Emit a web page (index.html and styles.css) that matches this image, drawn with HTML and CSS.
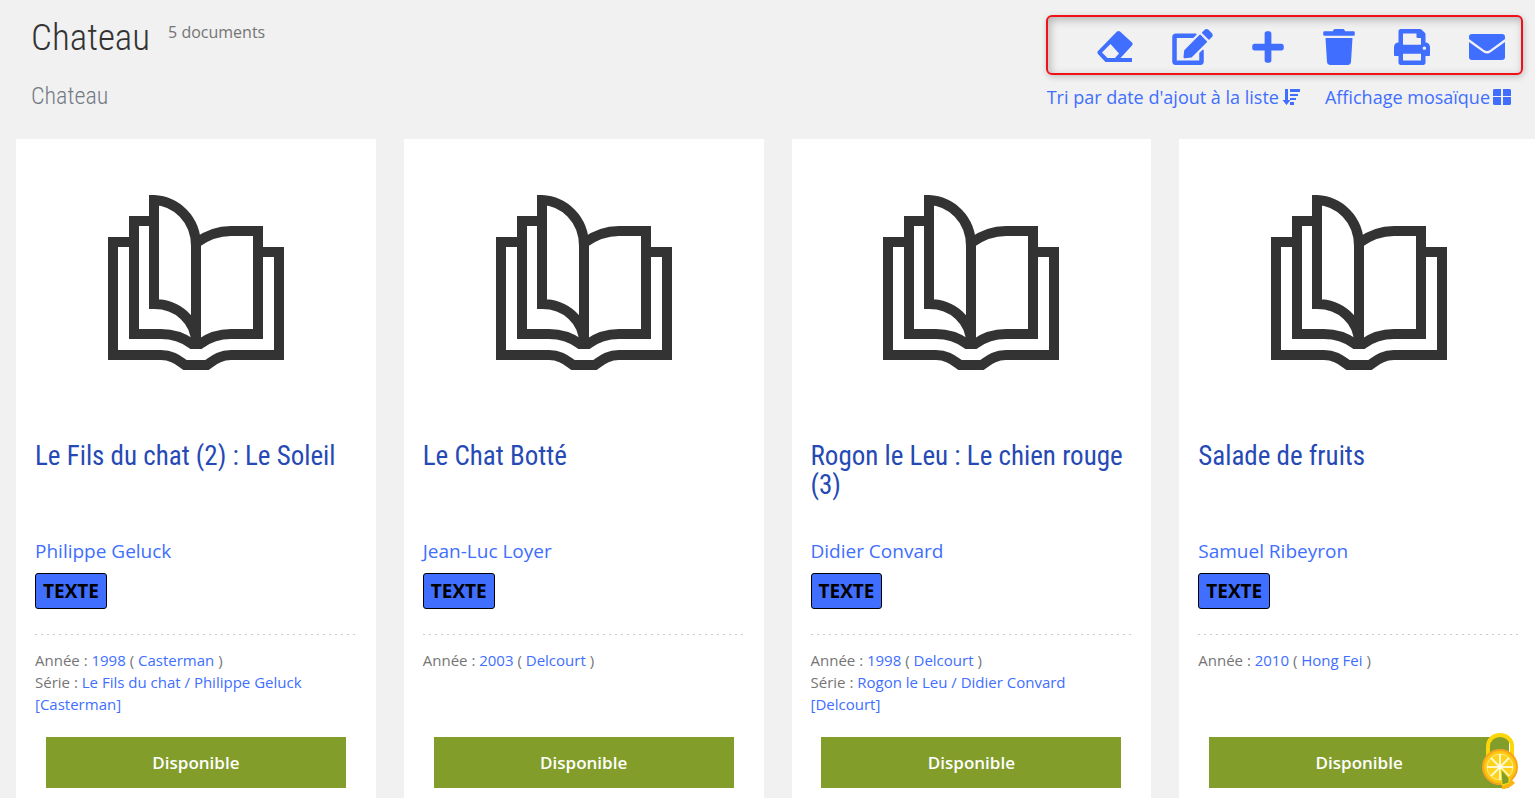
FILE: index.html
```
<!DOCTYPE html>
<html lang="fr">
<head>
    <meta charset="UTF-8">
    <title>Chateau</title>
    <link rel="stylesheet" href="styles.css">
</head>
<body>
    <svg class="sprite" aria-hidden="true">
        <symbol id="book" viewBox="0 0 176 176">
            <g fill="none" stroke="#333" stroke-width="10">
                <path d="M21 47H5v113h48c12 0 18 6 24 10h22c6-4 12-10 24-10h48V57h-16"/>
                <path d="M42 26H26v113h27c14 0 23 4 31 10h8c8-6 17-10 31-10h27V36h-27c-14 0-24 4-35 12"/>
                <path d="M88 148V51C88 24 68 6 46 5V109c24 0 42 17 42 39z"/>
            </g>
        </symbol>
    </svg>

    <header class="header">
        <div class="header-left">
            <div class="title-line">
                <h1>Chateau</h1>
                <span class="count">5 documents</span>
            </div>
            <h2>Chateau</h2>
        </div>
        <div class="header-right">
            <div class="toolbar">
                <button type="button" title="Vider"><svg width="36" height="36" viewBox="0 0 36 36"><path fill-rule="evenodd" d="M20 2.500q1.500-1 3 0l12 11q1.300 1.500 0 3L23.500 29H35v4H8.500L1 25q-1.300-1.600 0-3zM13.500 15L5 23.500l5.500 5.500h7.500l4-4.500z"/></svg></button>
                <button type="button" title="Modifier"><svg width="41" height="36" viewBox="0 0 576 512"><path d="M402.600 83.200l90.200 90.200c3.800 3.800 3.800 10 0 13.800L274.400 405.600l-92.800 10.300c-12.400 1.400-22.900-9.100-21.500-21.500l10.300-92.800L388.800 83.200c3.800-3.800 10-3.800 13.800 0zm162-22.900l-48.800-48.800c-15.200-15.200-39.900-15.200-55.200 0l-35.400 35.400c-3.800 3.800-3.800 10 0 13.800l90.200 90.200c3.800 3.800 10 3.800 13.800 0l35.400-35.400c15.200-15.300 15.200-40 0-55.200zM384 346.200V448H64V128h229.800c3.200 0 6.200-1.300 8.500-3.500l40-40c7.600-7.600 2.200-20.500-8.500-20.500H48C21.500 64 0 85.500 0 112v352c0 26.500 21.500 48 48 48h352c26.500 0 48-21.500 48-48V306.200c0-10.700-12.900-16-20.500-8.500l-40 40c-2.200 2.300-3.500 5.300-3.500 8.500z"/></svg></button>
                <button type="button" title="Ajouter"><svg width="32" height="36" viewBox="0 0 448 512"><path d="M416 208H272V64c0-17.670-14.330-32-32-32h-32c-17.670 0-32 14.330-32 32v144H32c-17.670 0-32 14.330-32 32v32c0 17.670 14.330 32 32 32h144v144c0 17.670 14.330 32 32 32h32c17.670 0 32-14.330 32-32V304h144c17.670 0 32-14.330 32-32v-32c0-17.670-14.330-32-32-32z"/></svg></button>
                <button type="button" title="Supprimer"><svg width="32" height="36" viewBox="0 0 448 512"><path d="M432 32H312l-9.400-18.700A24 24 0 0 0 281.100 0H166.800a23.720 23.720 0 0 0-21.400 13.300L136 32H16A16 16 0 0 0 0 48v32a16 16 0 0 0 16 16h416a16 16 0 0 0 16-16V48a16 16 0 0 0-16-16zM53.200 467a48 48 0 0 0 47.900 45h245.800a48 48 0 0 0 47.900-45L416 128H32z"/></svg></button>
                <button type="button" title="Imprimer"><svg width="36" height="36" viewBox="0 0 512 512"><path d="M448 192V77.250c0-8.490-3.370-16.620-9.370-22.630L393.370 9.370c-6-6-14.140-9.370-22.630-9.370H96C78.330 0 64 14.330 64 32v160c-35.350 0-64 28.650-64 64v112c0 8.840 7.160 16 16 16h48v96c0 17.670 14.330 32 32 32h320c17.670 0 32-14.330 32-32v-96h48c8.840 0 16-7.160 16-16V256c0-35.350-28.650-64-64-64zm-64 256H128v-96h256v96zm0-224H128V64h192v48c0 8.840 7.160 16 16 16h48v96zm48 72c-13.250 0-24-10.750-24-24 0-13.260 10.750-24 24-24s24 10.740 24 24c0 13.250-10.750 24-24 24z"/></svg></button>
                <button type="button" title="Envoyer"><svg width="36" height="36" viewBox="0 0 36 36"><path d="M3 5h30q3 0 3 3v2L21 21q-3 2-6 0L0 10V8q0-3 3-3zM0 13l14 10q4 3 8 0l14-10v15q0 3-3 3H3q-3 0-3-3z"/></svg></button>
            </div>
            <nav class="display">
                <a href="#">Tri par date d'ajout à la liste <svg width="18" height="18" viewBox="0 0 18 18"><path d="M3 1h3v11h2.500l-4 5-4-5H3zM8 1h10v3H8zM8 6h8v2H8zM8 10h6v2H8zM8 14h4v3H8z"/></svg></a>
                <a href="#">Affichage mosaïque <svg width="18" height="18" viewBox="0 0 18 18"><path d="M1 1h7v7H0V2zM10 1h7l1 1v6h-8zM0 9h8v8H1l-1-1zM10 9h8v7l-1 1h-7z"/></svg></a>
            </nav>
        </div>
    </header>

    <main class="cards">
        <article class="card">
            <svg class="cover"><use href="#book"/></svg>
            <h3><a href="#">Le Fils du chat (2) : Le Soleil</a></h3>
            <a class="author" href="#">Philippe Geluck</a>
            <span class="type">TEXTE</span>
            <div class="infos">
                <p>Année : <a href="#">1998</a> ( <a href="#">Casterman</a> )</p>
                <p>Série : <a href="#">Le Fils du chat / Philippe Geluck [Casterman]</a></p>
            </div>
            <button type="button" class="dispo">Disponible</button>
        </article>
        <article class="card">
            <svg class="cover"><use href="#book"/></svg>
            <h3><a href="#">Le Chat Botté</a></h3>
            <a class="author" href="#">Jean-Luc Loyer</a>
            <span class="type">TEXTE</span>
            <div class="infos">
                <p>Année : <a href="#">2003</a> ( <a href="#">Delcourt</a> )</p>
            </div>
            <button type="button" class="dispo">Disponible</button>
        </article>
        <article class="card">
            <svg class="cover"><use href="#book"/></svg>
            <h3><a href="#">Rogon le Leu : Le chien rouge (3)</a></h3>
            <a class="author" href="#">Didier Convard</a>
            <span class="type">TEXTE</span>
            <div class="infos">
                <p>Année : <a href="#">1998</a> ( <a href="#">Delcourt</a> )</p>
                <p>Série : <a href="#">Rogon le Leu / Didier Convard [Delcourt]</a></p>
            </div>
            <button type="button" class="dispo">Disponible</button>
        </article>
        <article class="card">
            <svg class="cover"><use href="#book"/></svg>
            <h3><a href="#">Salade de fruits</a></h3>
            <a class="author" href="#">Samuel Ribeyron</a>
            <span class="type">TEXTE</span>
            <div class="infos">
                <p>Année : <a href="#">2010</a> ( <a href="#">Hong Fei</a> )</p>
            </div>
            <button type="button" class="dispo">Disponible</button>
        </article>
    </main>

    <button type="button" class="cookies" title="Cookies">
        <svg width="38" height="58" viewBox="0 0 38 58">
            <path d="M7 26V14a12 11 0 0 1 24 0v12" fill="none" stroke="#fbd608" stroke-width="4"/>
            <circle cx="19" cy="35" r="18" fill="#f7a41d"/>
            <circle cx="19" cy="35" r="16" fill="#fdc70c"/>
            <circle cx="19" cy="35" r="13" fill="#fcd21c" stroke="#fdec8c" stroke-width="1"/>
            <path d="M19 22v26M6 35h26M10 26l18 18M28 26L10 44" stroke="#fff7c8" stroke-width="2"/>
            <circle cx="19" cy="35" r="2" fill="#fff"/>
            <path d="M20 37l14 14q-6 6-13 6z" fill="#fbb515"/>
            <path d="M20 37l8 9v5l-7 2z" fill="#829d2a" stroke="#fbe30a" stroke-width="1"/>
        </svg>
    </button>
</body>
</html>
```
FILE: styles.css
```
*{
    margin: 0;
    padding: 0;
    box-sizing: border-box;
}
body{
    background-color: #f1f1f1;
    font-family: "Open Sans", sans-serif;
    font-size: 19px;
    color: #757575;
    overflow-x: hidden;
}
body::-webkit-scrollbar{
    display: none;
}
a{
    color: #406eff;
    text-decoration: none;
}
button{
    border: none;
    background: none;
    font-family: inherit;
    cursor: pointer;
}
.sprite{
    display: none;
}
h1, h2, h3{
    font-family: "Roboto Condensed", Roboto, sans-serif;
    font-weight: 300;
}
.header{
    display: flex;
    justify-content: space-between;
    padding: 15px 12px 0 31px;
    height: 139px;
}
.title-line{
    display: flex;
    gap: 18px;
}
h1{
    font-size: 37px;
    line-height: 46px;
    color: #333;
}
.count{
    font-size: 16px;
    line-height: 34px;
}
h2{
    margin-top: 20px;
    font-size: 24px;
    line-height: 30px;
    color: #757b85;
}
.toolbar{
    display: flex;
    justify-content: flex-end;
    align-items: center;
    gap: 39px;
    height: 60px;
    padding: 4px 16px 0 49px;
    border: 2px solid #f01018;
    border-radius: 6px;
    box-shadow: 1px 2px 6px rgba(0, 0, 0, 0.2), inset 2px 3px 8px rgba(0, 0, 0, 0.25);
}
.toolbar svg, .display svg{
    display: block;
    fill: #406eff;
}
.display{
    display: flex;
    justify-content: flex-end;
    gap: 25px;
    padding: 10px 12px 0 0;
    font-size: 18px;
    line-height: 24px;
}
.display a{
    display: flex;
    align-items: center;
    gap: 3px;
}
.cards{
    display: grid;
    grid-template-columns: repeat(4, 1fr);
    gap: 28px;
    margin: 0 -4px 0 16px;
}
.card{
    display: flex;
    flex-direction: column;
    align-items: flex-start;
    padding: 56px 19px 28px;
    background: #fff;
}
.cover{
    align-self: center;
    width: 176px;
    height: 176px;
    margin-bottom: 71px;
}
h3{
    min-height: 96px;
    font-size: 27px;
    font-weight: 400;
    line-height: 29px;
}
h3 a{
    color: #264ab5;
}
.author{
    line-height: 26px;
}
.type{
    margin: 9px 0 25px;
    padding: 1px 7px 0;
    border: 1px solid #000;
    border-radius: 3px;
    background: #406eff;
    color: #000;
    font-weight: bold;
    line-height: 33px;
}
.infos{
    width: 100%;
    min-height: 103px;
    padding-top: 15px;
    background: repeating-linear-gradient(90deg, #ccc 0 2px, transparent 2px 6px) top / 100% 1px no-repeat;
    font-size: 15px;
    line-height: 22px;
}
.dispo{
    align-self: center;
    width: 300px;
    height: 51px;
    background: #829d2a;
    color: #fff;
    font-size: 17px;
    font-weight: 600;
}
.cookies{
    position: fixed;
    right: 16px;
    bottom: 8px;
    height: 58px;
}
```
